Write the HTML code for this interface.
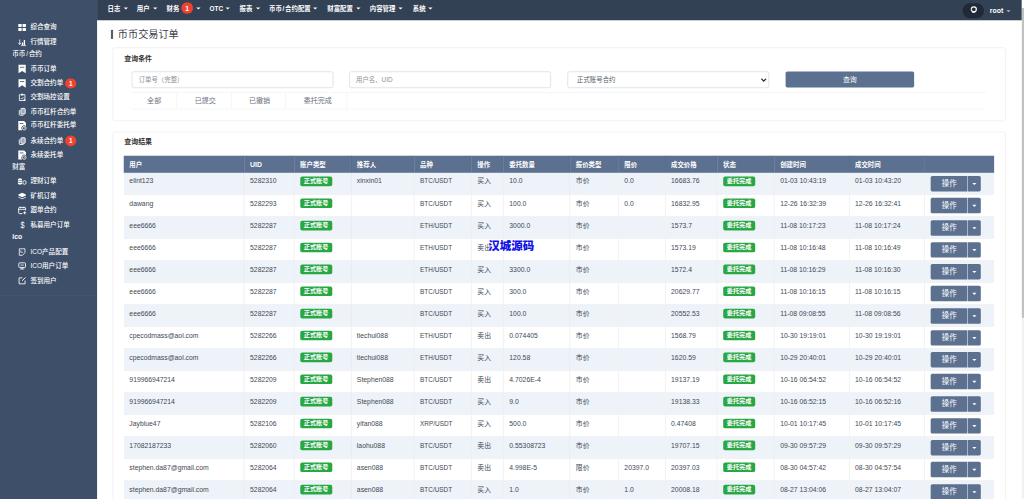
<!DOCTYPE html>
<html lang="zh-CN"><head><meta charset="utf-8"><title>币币交易订单</title>
<style>
*{box-sizing:border-box;margin:0;padding:0}
html,body{width:1024px;height:499px;overflow:hidden;background:#fff}
body{font-family:"Liberation Sans","Noto Sans CJK SC",sans-serif;color:#3d4852;position:relative}
#app{position:absolute;left:0;top:0;width:1920px;height:936px;transform:scale(0.5333333);transform-origin:0 0;overflow:hidden;background:#fff;font-size:13px}
#side{position:absolute;left:0;top:0;width:181.500px;height:936px;background:#3e4f69;color:#fff}
#side .it{position:absolute;left:0;height:24px;line-height:24px;font-size:12.300px;white-space:nowrap;font-weight:500}
#side .it svg{position:absolute;left:30.500px;top:2px;width:21px;height:21px}
#side .it span.t{position:absolute;left:57px;top:0}
#side .hd{position:absolute;left:23px;height:24px;line-height:24px;font-size:12.300px;font-weight:500;white-space:nowrap}
#side .bd,#top .bd{display:inline-block;width:21.500px;height:19.500px;line-height:20.500px;border-radius:10px;background:#f0432f;color:#fff;font-size:12px;font-weight:700;text-align:center;font-family:"Liberation Sans",sans-serif}
#side hr{position:absolute;left:0;width:182px;top:553px;border:0;border-top:1px solid #4c5d77}
#top{position:absolute;left:182px;top:0;width:1734px;height:37.500px;background:#334155;color:#fff}
#top .m{position:absolute;top:3.700px;height:24px;line-height:24px;font-size:12px;font-weight:700;white-space:nowrap}
#top .c{position:absolute;top:14px;width:0;height:0;border-left:4px solid transparent;border-right:4px solid transparent;border-top:4px solid #fff}
#sb{position:absolute;left:1916px;top:0;width:4px;height:936px;background:#f1f1f1}
#sb i{position:absolute;left:0;top:15px;width:5px;height:581px;background:#c1c1c1;display:block}
#sb b{position:absolute;left:0;top:0;width:5px;height:15px;background:#fff;display:block}
h1{position:absolute;left:221px;top:50px;height:30px;line-height:30px;font-size:19.050px;font-weight:400;color:#3a3f4a;white-space:nowrap}
h1:before{content:"";position:absolute;left:-13px;top:6px;width:4px;height:17px;background:#5c5c5c}
.card{position:absolute;left:210.500px;width:1675px;border:1.500px solid #e4e5e7;border-radius:5px;background:#fff}
.ct{position:absolute;left:21.500px;font-size:13px;font-weight:700;color:#333;height:20px;line-height:20px}
.inp{position:absolute;top:44px;height:31px;border:1px solid #c6cdd6;border-radius:4px;font-size:12px;line-height:29px;color:#8a9099;padding-left:12px;background:#fff;white-space:nowrap}
.btnq{position:absolute;top:44px;height:30px;background:#5c7090;color:#fff;border-radius:3px;text-align:center;line-height:30px;font-size:13px}
.tabs{position:absolute;left:35.500px;top:83px;width:1602px;height:32px;border-top:1px solid #eceef0;border-bottom:1px solid #eceef0}
.tabs span{position:absolute;top:0;height:30px;line-height:30px;text-align:center;font-size:13.200px;color:#6b7280;border-right:1px solid #eceef0}
table{position:absolute;left:20.500px;top:43.500px;border-collapse:collapse;table-layout:fixed;width:1631.700px;font-size:12.800px;color:#414853}
th{background:#5c7090;color:#fff;font-weight:700;text-align:left;height:32px;line-height:28px;vertical-align:top;padding:3.800px 0 0 10.500px;font-size:12px;border-left:1px solid #53668a;white-space:nowrap}
th:first-child{border-left:0}
td{height:41.250px;vertical-align:top;padding:6.600px 0 0 10.500px;line-height:20px;border-left:1px solid #e3e6ea;border-bottom:1px solid #e3e6ea;white-space:nowrap;overflow:hidden}
td:first-child{border-left:0}
tr.o td{background:#eef2f9}
.g{display:inline-block;background:#28a745;color:#fff;font-weight:700;font-size:11.500px;line-height:17.500px;height:18px;padding:0 7px;border-radius:3.500px;vertical-align:top;margin-top:0.500px}
.ab{display:block;position:relative;margin:-0.600px 0 0 1px;width:94px;height:29px}
.ab u{position:absolute;left:0;top:0;width:69px;height:29px;background:#5c7090;color:#fff;text-decoration:none;text-align:center;line-height:29px;font-size:14px;border-radius:3px 0 0 3px}
.ab s{position:absolute;left:70px;top:0;width:24px;height:29px;background:#5c7090;border-radius:0 3px 3px 0}
.ab s:after{content:"";position:absolute;left:8px;top:13px;border-left:4px solid transparent;border-right:4px solid transparent;border-top:4px solid #fff}
#wm{position:absolute;left:915.500px;top:446.500px;font-size:21.500px;font-weight:900;color:#1212e8;line-height:30px;white-space:nowrap;letter-spacing:0}
</style></head><body><div id="app">
<div id="side"><div class="it" style="top:38.8px"><svg viewBox="0 0 21 21"><rect x="3.3" y="4" width="6.4" height="5.700" rx="0.8" fill="#fff"/><rect x="11.300" y="4" width="6.400" height="5.700" rx="0.8" fill="#fff"/><rect x="3.300" y="11.300" width="6.400" height="5.700" rx="0.8" fill="#fff"/><rect x="11.300" y="11.300" width="6.400" height="5.700" rx="0.8" fill="#fff"/></svg><span class="t">综合查询</span></div><div class="it" style="top:66.6px"><svg viewBox="0 0 21 21"><path d="M6 5v9M3.500 11.500L6 14.500l2.500-3" stroke="#fff" stroke-width="1.500" fill="none"/><path d="M10 15.500v-5h2.500v5M13.500 15.500v-9.500h2.500v9.500" fill="#fff"/><path d="M8.500 16.500h9.500" stroke="#fff" stroke-width="1.500"/></svg><span class="t">行情管理</span></div><div class="hd" style="top:89.1px">币币<span style="margin:0 1.400px">/</span>合约</div><div class="it" style="top:116.8px"><svg viewBox="0 0 21 21"><path d="M3.750 2.600h13.500v15.800l-6.750-4.500-6.750 4.500z" fill="#fff"/><rect x="6.500" y="6.300" width="8" height="1.500" fill="#3e4f69"/></svg><span class="t">币币订单</span></div><div class="it" style="top:144.0px"><svg viewBox="0 0 21 21"><path d="M3.750 2.600h13.500v15.800l-6.750-4.500-6.750 4.500z" fill="#fff"/><rect x="6.500" y="6.300" width="8" height="1.500" fill="#3e4f69"/></svg><span class="t">交割合约单 <span class="bd" style="vertical-align:top;margin-top:2.500px;margin-left:0">1</span></span></div><div class="it" style="top:170.2px"><svg viewBox="0 0 21 21"><path d="M7 5.500H5.300v11h10.400v-11H14" stroke="#fff" stroke-width="1.600" fill="none"/><rect x="7.500" y="3.750" width="6" height="3.200" rx="0.800" fill="#fff"/><path d="M7.800 11.800l2 2 3.200-3.800" stroke="#fff" stroke-width="1.400" fill="none"/><circle cx="14.800" cy="15.800" r="1.800" fill="#fff"/></svg><span class="t">交割场控设置</span></div><div class="it" style="top:197.0px"><svg viewBox="0 0 21 21"><rect x="8.200" y="4.300" width="8" height="10.400" rx="1.300" stroke="#fff" stroke-width="1.700" fill="#fff" fill-opacity="0.5"/><path d="M5.200 7.300v8.500c0 .7.500 1.200 1.200 1.200h6.800" stroke="#fff" stroke-width="1.700" fill="none"/></svg><span class="t">币币杠杆合约单</span></div><div class="it" style="top:223.3px"><svg viewBox="0 0 21 21"><path d="M3.300 2h11l3.400 3.400v6.100a5 5 0 0 0-6.700 7.500H3.300z" fill="#fff"/><rect x="6" y="6" width="7" height="1.500" fill="#3e4f69"/><circle cx="14.500" cy="15.300" r="3.400" stroke="#fff" stroke-width="1.500" fill="none"/><path d="M14.500 13.500v1.900h1.600" stroke="#fff" stroke-width="1.100" fill="none"/></svg><span class="t">币币杠杆委托单</span></div><div class="it" style="top:251.8px"><svg viewBox="0 0 21 21"><rect x="8.200" y="4.300" width="8" height="10.400" rx="1.300" stroke="#fff" stroke-width="1.700" fill="#fff" fill-opacity="0.5"/><path d="M5.200 7.300v8.500c0 .7.500 1.200 1.200 1.200h6.800" stroke="#fff" stroke-width="1.700" fill="none"/></svg><span class="t">永续合约单 <span class="bd" style="vertical-align:top;margin-top:2.500px;margin-left:0">1</span></span></div><div class="it" style="top:278.1px"><svg viewBox="0 0 21 21"><path d="M3.300 2h11l3.400 3.400v6.100a5 5 0 0 0-6.700 7.500H3.300z" fill="#fff"/><rect x="6" y="6" width="7" height="1.500" fill="#3e4f69"/><circle cx="14.500" cy="15.300" r="3.400" stroke="#fff" stroke-width="1.500" fill="none"/><path d="M14.500 13.500v1.900h1.600" stroke="#fff" stroke-width="1.100" fill="none"/></svg><span class="t">永续委托单</span></div><div class="hd" style="top:299.6px">财富</div><div class="it" style="top:328.1px"><svg viewBox="0 0 21 21"><rect x="2.600" y="4.900" width="7.800" height="11.200" rx="2.400" fill="#fff"/><path d="M2.600 8.700h7.800M2.600 12.200h7.800" stroke="#3e4f69" stroke-width="1.100"/><rect x="11.800" y="8.900" width="6.200" height="6.600" rx="2.800" stroke="#fff" stroke-width="1.700" fill="none"/></svg><span class="t">理财订单</span></div><div class="it" style="top:355.4px"><svg viewBox="0 0 21 21"><path d="M10.500 4.500l7 3.300v1.700l-7 3.300-7-3.300V7.800z" fill="#fff"/><path d="M3.500 11.700l7 3.300 7-3.300v1.800l-7 3.300-7-3.300z" fill="#fff"/></svg><span class="t">矿机订单</span></div><div class="it" style="top:382.1px"><svg viewBox="0 0 21 21"><path d="M17 10.500V6.300c0-.8-.6-1.400-1.400-1.400H5.400c-.8 0-1.400.6-1.400 1.400v8.900c0 .8.600 1.400 1.400 1.400H11" stroke="#fff" stroke-width="1.700" fill="none"/><path d="M7.300 3.500v3M13.700 3.500v3M4 8.600h13" stroke="#fff" stroke-width="1.500"/><path d="M15.300 12.200v5.600M12.500 15h5.600" stroke="#fff" stroke-width="1.700"/></svg><span class="t">跟单合约</span></div><div class="it" style="top:409.3px"><span style="position:absolute;left:35.500px;top:0.500px;width:12px;text-align:center;font-size:16px;font-weight:400;transform:scaleX(0.85);font-family:'Liberation Sans',sans-serif">$</span><span class="t">私募用户订单</span></div><div class="hd" style="top:431.8px;font-weight:700;font-size:13px">ico</div><div class="it" style="top:460.4px"><svg viewBox="0 0 21 21"><path d="M5.200 4.500h10.600v7.200l-4.600 5H5.200z" stroke="#fff" stroke-width="1.500" fill="none"/><path d="M8 7.500v3.500h4" stroke="#fff" stroke-width="1.300" fill="none"/></svg><span class="t">ICO产品配置</span></div><div class="it" style="top:486.2px"><svg viewBox="0 0 21 21"><rect x="4.200" y="4.800" width="12.600" height="8.600" rx="1.200" stroke="#fff" stroke-width="1.600" fill="none"/><path d="M7.500 9h6" stroke="#fff" stroke-width="1.500"/><path d="M6.500 16.300h8M10.500 13.400v2.800" stroke="#fff" stroke-width="1.600"/></svg><span class="t">ICO用户订单</span></div><div class="it" style="top:514.3px"><svg viewBox="0 0 21 21"><path d="M11 5H4.800v11.200H16V10" stroke="#fff" stroke-width="1.600" fill="none"/><path d="M16.600 4.200l-6 6.400" stroke="#fff" stroke-width="1.800" fill="none"/></svg><span class="t">签到用户</span></div><hr></div><div id="top"><span class="m" style="left:19.6px">日志</span><i class="c" style="left:49.9px"></i><span class="m" style="left:74.4px">用户</span><i class="c" style="left:105.2px"></i><span class="m" style="left:130.2px">财务<span class="bd" style="margin-left:3.500px;vertical-align:top;margin-top:0.300px;width:22.500px;height:22.500px;line-height:26px;border-radius:11.250px;font-size:13px">1</span></span><i class="c" style="left:186.2px"></i><span class="m" style="left:210.8px">OTC</span><i class="c" style="left:240.8px"></i><span class="m" style="left:267.1px">报表</span><i class="c" style="left:297.8px"></i><span class="m" style="left:322.4px">币币<span style="margin:0 1.400px">/</span>合约配置</span><i class="c" style="left:405.1px"></i><span class="m" style="left:431.6px">财富配置</span><i class="c" style="left:486.2px"></i><span class="m" style="left:511.3px">内容管理</span><i class="c" style="left:564.9px"></i><span class="m" style="left:591.9px">系统</span><i class="c" style="left:620.7px"></i><span style="position:absolute;left:1622.6px;top:5.500px;width:40px;height:28px;border-radius:14px;background:#1f2937"></span><svg style="position:absolute;left:1635.7px;top:10px;width:16px;height:16px" viewBox="0 0 16 16"><circle cx="8" cy="7.500" r="4.700" stroke="#fff" stroke-width="2.200" fill="none"/><path d="M11.500 11.500q-2.500 3-6.500 1.800" stroke="#fff" stroke-width="1.600" fill="none"/><path d="M3.300 6v3.500" stroke="#f2b0a8" stroke-width="1.800"/><path d="M12.700 6v3.500" stroke="#bfe3ea" stroke-width="1.800"/></svg><span class="m" style="left:1673.8px;top:8px;font-size:13px">root</span><i class="c" style="left:1704.9px;top:19px;border-top-color:#aab3c0"></i></div><div id="sb"><i></i><b></b></div><h1>币币交易订单</h1><div class="card" style="top:89px;height:137.500px"><div class="ct" style="top:10.500px">查询条件</div><div class="inp" style="left:35.500px;width:378px">订单号（完整）</div><div class="inp" style="left:443px;width:378px">用户名、UID</div><div class="inp" style="left:852.500px;width:378px;padding-left:17px;color:#555e6b">正式账号合约<svg style="position:absolute;right:2.500px;top:8px;width:14px;height:14px" viewBox="0 0 12 12"><path d="M2.300 4l3.700 3.800L9.700 4" stroke="#333" stroke-width="2.100" fill="none"/></svg></div><div class="btnq" style="left:1261.500px;width:241px">查询</div><div class="tabs"><span style="left:0px;width:85px;padding-left:0.0px">全部</span><span style="left:85px;width:103px;padding-left:4.0px">已提交</span><span style="left:188px;width:101px;padding-left:3.0px">已撤销</span><span style="left:289px;width:115px;padding-left:5.5px">委托完成</span></div></div><div class="card" style="top:247px;height:760px"><div class="ct" style="top:8px">查询结果</div><table><colgroup><col style="width:225.9px"><col style="width:93.8px"><col style="width:106.4px"><col style="width:118.6px"><col style="width:107.3px"><col style="width:60.0px"><col style="width:124.7px"><col style="width:91.0px"><col style="width:87.6px"><col style="width:97.5px"><col style="width:107.1px"><col style="width:140.4px"><col style="width:141.1px"><col style="width:130.3px"></colgroup><thead><tr><th>用户</th><th><span style="font-size:13px">UID</span></th><th>账户类型</th><th>推荐人</th><th>品种</th><th>操作</th><th>委托数量</th><th>报价类型</th><th>限价</th><th>成交价格</th><th>状态</th><th>创建时间</th><th>成交时间</th><th></th></tr></thead><tbody><tr class="o"><td>elint123</td><td>5282310</td><td><span class="g">正式账号</span></td><td>xinxin01</td><td><span style="font-size:12px">BTC/USDT</span></td><td>买入</td><td>10.0</td><td>市价</td><td>0.0</td><td>16683.76</td><td><span class="g">委托完成</span></td><td>01-03 10:43:19</td><td>01-03 10:43:20</td><td><span class="ab"><u>操作</u><s></s></span></td></tr><tr><td>dawang</td><td>5282293</td><td><span class="g">正式账号</span></td><td></td><td><span style="font-size:12px">BTC/USDT</span></td><td>买入</td><td>100.0</td><td>市价</td><td>0.0</td><td>16832.95</td><td><span class="g">委托完成</span></td><td>12-26 16:32:39</td><td>12-26 16:32:41</td><td><span class="ab"><u>操作</u><s></s></span></td></tr><tr class="o"><td>eee6666</td><td>5282287</td><td><span class="g">正式账号</span></td><td></td><td><span style="font-size:12px">ETH/USDT</span></td><td>买入</td><td>3000.0</td><td>市价</td><td></td><td>1573.7</td><td><span class="g">委托完成</span></td><td>11-08 10:17:23</td><td>11-08 10:17:24</td><td><span class="ab"><u>操作</u><s></s></span></td></tr><tr><td>eee6666</td><td>5282287</td><td><span class="g">正式账号</span></td><td></td><td><span style="font-size:12px">ETH/USDT</span></td><td>卖出</td><td></td><td>市价</td><td></td><td>1573.19</td><td><span class="g">委托完成</span></td><td>11-08 10:16:48</td><td>11-08 10:16:49</td><td><span class="ab"><u>操作</u><s></s></span></td></tr><tr class="o"><td>eee6666</td><td>5282287</td><td><span class="g">正式账号</span></td><td></td><td><span style="font-size:12px">ETH/USDT</span></td><td>买入</td><td>3300.0</td><td>市价</td><td></td><td>1572.4</td><td><span class="g">委托完成</span></td><td>11-08 10:16:29</td><td>11-08 10:16:30</td><td><span class="ab"><u>操作</u><s></s></span></td></tr><tr><td>eee6666</td><td>5282287</td><td><span class="g">正式账号</span></td><td></td><td><span style="font-size:12px">BTC/USDT</span></td><td>买入</td><td>300.0</td><td>市价</td><td></td><td>20629.77</td><td><span class="g">委托完成</span></td><td>11-08 10:16:15</td><td>11-08 10:16:15</td><td><span class="ab"><u>操作</u><s></s></span></td></tr><tr class="o"><td>eee6666</td><td>5282287</td><td><span class="g">正式账号</span></td><td></td><td><span style="font-size:12px">BTC/USDT</span></td><td>买入</td><td>100.0</td><td>市价</td><td></td><td>20552.53</td><td><span class="g">委托完成</span></td><td>11-08 09:08:55</td><td>11-08 09:08:56</td><td><span class="ab"><u>操作</u><s></s></span></td></tr><tr><td>cpecodmass@aol.com</td><td>5282266</td><td><span class="g">正式账号</span></td><td>tiechui088</td><td><span style="font-size:12px">ETH/USDT</span></td><td>卖出</td><td>0.074405</td><td>市价</td><td></td><td>1568.79</td><td><span class="g">委托完成</span></td><td>10-30 19:19:01</td><td>10-30 19:19:01</td><td><span class="ab"><u>操作</u><s></s></span></td></tr><tr class="o"><td>cpecodmass@aol.com</td><td>5282266</td><td><span class="g">正式账号</span></td><td>tiechui088</td><td><span style="font-size:12px">ETH/USDT</span></td><td>买入</td><td>120.58</td><td>市价</td><td></td><td>1620.59</td><td><span class="g">委托完成</span></td><td>10-29 20:40:01</td><td>10-29 20:40:01</td><td><span class="ab"><u>操作</u><s></s></span></td></tr><tr><td>919966947214</td><td>5282209</td><td><span class="g">正式账号</span></td><td>Stephen088</td><td><span style="font-size:12px">BTC/USDT</span></td><td>卖出</td><td>4.7026E-4</td><td>市价</td><td></td><td>19137.19</td><td><span class="g">委托完成</span></td><td>10-16 06:54:52</td><td>10-16 06:54:52</td><td><span class="ab"><u>操作</u><s></s></span></td></tr><tr class="o"><td>919966947214</td><td>5282209</td><td><span class="g">正式账号</span></td><td>Stephen088</td><td><span style="font-size:12px">BTC/USDT</span></td><td>买入</td><td>9.0</td><td>市价</td><td></td><td>19138.33</td><td><span class="g">委托完成</span></td><td>10-16 06:52:15</td><td>10-16 06:52:16</td><td><span class="ab"><u>操作</u><s></s></span></td></tr><tr><td>Jayblue47</td><td>5282106</td><td><span class="g">正式账号</span></td><td>yifan088</td><td><span style="font-size:12px">XRP/USDT</span></td><td>买入</td><td>500.0</td><td>市价</td><td></td><td>0.47408</td><td><span class="g">委托完成</span></td><td>10-01 10:17:45</td><td>10-01 10:17:45</td><td><span class="ab"><u>操作</u><s></s></span></td></tr><tr class="o"><td>17082187233</td><td>5282060</td><td><span class="g">正式账号</span></td><td>laohu088</td><td><span style="font-size:12px">BTC/USDT</span></td><td>卖出</td><td>0.55308723</td><td>市价</td><td></td><td>19707.15</td><td><span class="g">委托完成</span></td><td>09-30 09:57:29</td><td>09-30 09:57:29</td><td><span class="ab"><u>操作</u><s></s></span></td></tr><tr><td>stephen.da87@gmail.com</td><td>5282064</td><td><span class="g">正式账号</span></td><td>asen088</td><td><span style="font-size:12px">BTC/USDT</span></td><td>卖出</td><td>4.998E-5</td><td>限价</td><td>20397.0</td><td>20397.03</td><td><span class="g">委托完成</span></td><td>08-30 04:57:42</td><td>08-30 04:57:54</td><td><span class="ab"><u>操作</u><s></s></span></td></tr><tr class="o"><td>stephen.da87@gmail.com</td><td>5282064</td><td><span class="g">正式账号</span></td><td>asen088</td><td><span style="font-size:12px">BTC/USDT</span></td><td>买入</td><td>1.0</td><td>市价</td><td>1.0</td><td>20008.18</td><td><span class="g">委托完成</span></td><td>08-27 13:04:06</td><td>08-27 13:04:07</td><td><span class="ab"><u>操作</u><s></s></span></td></tr></tbody></table></div><div id="wm">汉城源码</div></div></body></html>
